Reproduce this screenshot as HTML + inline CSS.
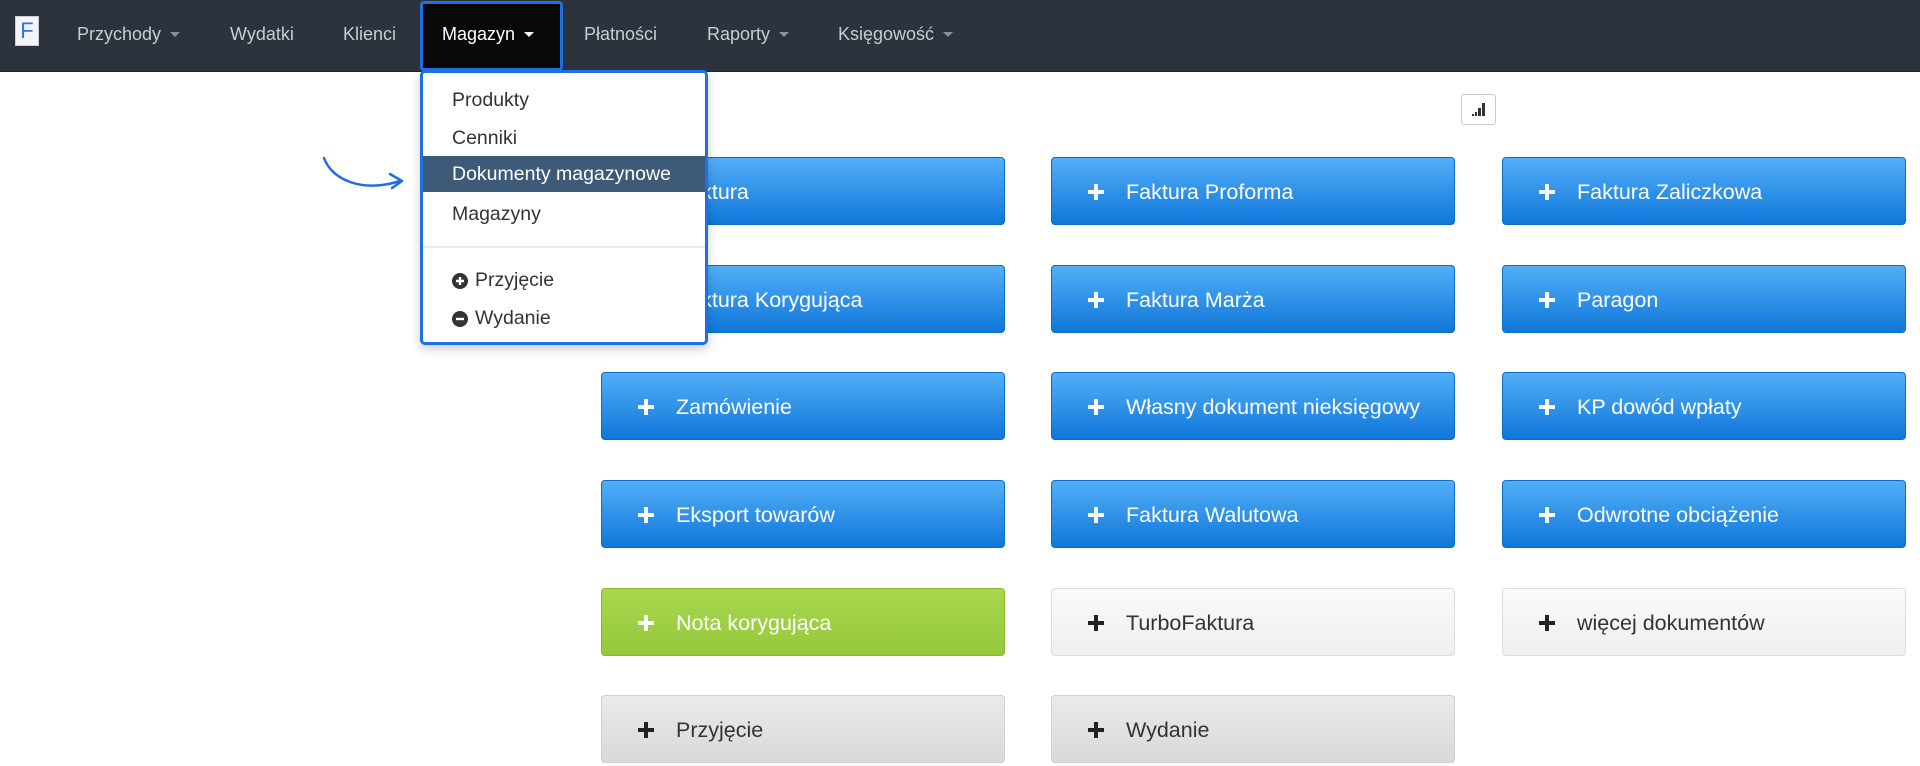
<!DOCTYPE html>
<html><head><meta charset="utf-8"><style>
*{box-sizing:border-box;margin:0;padding:0}
body{width:1920px;height:766px;background:#fff;font-family:"Liberation Sans",Arial,sans-serif;position:relative;overflow:hidden}
.nav{position:absolute;left:0;top:0;width:1920px;height:72px;background:#2c333d;border-bottom:1px solid #1e242b}
.ni{position:absolute;top:24px;color:#c9ccd0;font-size:18px;white-space:nowrap}
.car{display:inline-block;width:0;height:0;border-left:5px solid transparent;border-right:5px solid transparent;border-top:5px solid #8a9099;margin-left:9px;vertical-align:3px}
.logo{position:absolute;left:15px;top:16px;width:24px;height:30px;background:#f4f4f8;border:1px solid #ccc;color:#2a77d6;font-size:22px;line-height:28px;text-align:center}
.mag{position:absolute;left:420px;top:1px;width:143px;height:70px;background:#080808;border:3px solid #1f6fe5;border-radius:4px}
.dd{position:absolute;left:420px;top:70px;width:288px;height:275px;background:#fff;border:3px solid #1f6fe5;border-radius:5px;z-index:5;box-shadow:0 4px 10px rgba(0,0,0,.2)}
.di{position:absolute;left:29px;font-size:19.5px;color:#333;white-space:nowrap}
.hl{position:absolute;left:0;top:83px;width:282px;height:36px;background:#3d5a78}
.btn{position:absolute;width:404px;height:68px;border-radius:4px;font-size:21.5px;color:#fff;line-height:68px;padding-left:74px;white-space:nowrap}
.btn svg{position:absolute;left:36px;top:26px}
.b{background:linear-gradient(#52aef7,#0f77da);border:1px solid #0c6cc8}
.g{background:linear-gradient(#a9d64e,#94c93c);border:1px solid #86b830}
.l{background:linear-gradient(#fafafa,#efefef);border:1px solid #ddd;color:#333}
.d{background:linear-gradient(#eaeaea,#d9d9d9);border:1px solid #d0d0d0;color:#333}
</style></head><body>
<div class="nav">
<div class="logo">F</div>
<div class="ni" style="left:77px">Przychody<span class="car"></span></div>
<div class="ni" style="left:230px">Wydatki</div>
<div class="ni" style="left:343px">Klienci</div>
<div class="mag"></div>
<div class="ni" style="left:442px;color:#fff">Magazyn<span class="car" style="border-top-color:#fff"></span></div>
<div class="ni" style="left:584px">Płatności</div>
<div class="ni" style="left:707px">Raporty<span class="car"></span></div>
<div class="ni" style="left:838px">Księgowość<span class="car"></span></div>
</div>
<svg style="position:absolute;left:322px;top:155px" width="86" height="40" viewBox="0 0 86 40"><path d="M2 3 C10 25 40 38 78 26" fill="none" stroke="#1f6fe5" stroke-width="2.5" stroke-linecap="round"/><path d="M68 19 L80 26 L70 33" fill="none" stroke="#1f6fe5" stroke-width="2.5" stroke-linecap="round" stroke-linejoin="round"/></svg>
<div class="dd">
<div class="di" style="top:16px">Produkty</div>
<div class="di" style="top:54px">Cenniki</div>
<div class="hl"></div>
<div class="di" style="top:90px;color:#fff">Dokumenty magazynowe</div>
<div class="di" style="top:130px">Magazyny</div>
<div style="position:absolute;left:0;top:173px;width:282px;height:2px;background:#e8e8e8"></div>
<svg style="position:absolute;left:29px;top:200px" width="16" height="16"><circle cx="8" cy="8" r="8" fill="#333"/><path d="M8 4v8M4 8h8" stroke="#fff" stroke-width="2.4"/></svg>
<div class="di" style="top:196px;left:52px">Przyjęcie</div>
<svg style="position:absolute;left:29px;top:238px" width="16" height="16"><circle cx="8" cy="8" r="8" fill="#333"/><path d="M4 8h8" stroke="#fff" stroke-width="2.4"/></svg>
<div class="di" style="top:234px;left:52px">Wydanie</div>
</div>
<div style="position:absolute;left:1461px;top:94px;width:35px;height:31px;border:1px solid #ccc;border-radius:3px;background:#fff">
<svg width="33" height="29"><rect x="10" y="19" width="2" height="2" fill="#333"/><rect x="13" y="17" width="2" height="4" fill="#333"/><rect x="16" y="13" width="3" height="8" fill="#333"/><rect x="20" y="8" width="3" height="13" fill="#333"/></svg></div>

<div class="btn b" style="left:601px;top:157px"><svg width="16" height="16"><path d="M8 0v16M0 8h16" stroke="#fff" stroke-width="4"/></svg>Faktura</div>
<div class="btn b" style="left:1051px;top:157px"><svg width="16" height="16"><path d="M8 0v16M0 8h16" stroke="#fff" stroke-width="4"/></svg>Faktura Proforma</div>
<div class="btn b" style="left:1502px;top:157px"><svg width="16" height="16"><path d="M8 0v16M0 8h16" stroke="#fff" stroke-width="4"/></svg>Faktura Zaliczkowa</div>
<div class="btn b" style="left:601px;top:265px"><svg width="16" height="16"><path d="M8 0v16M0 8h16" stroke="#fff" stroke-width="4"/></svg>Faktura Korygująca</div>
<div class="btn b" style="left:1051px;top:265px"><svg width="16" height="16"><path d="M8 0v16M0 8h16" stroke="#fff" stroke-width="4"/></svg>Faktura Marża</div>
<div class="btn b" style="left:1502px;top:265px"><svg width="16" height="16"><path d="M8 0v16M0 8h16" stroke="#fff" stroke-width="4"/></svg>Paragon</div>
<div class="btn b" style="left:601px;top:372px"><svg width="16" height="16"><path d="M8 0v16M0 8h16" stroke="#fff" stroke-width="4"/></svg>Zamówienie</div>
<div class="btn b" style="left:1051px;top:372px"><svg width="16" height="16"><path d="M8 0v16M0 8h16" stroke="#fff" stroke-width="4"/></svg>Własny dokument nieksięgowy</div>
<div class="btn b" style="left:1502px;top:372px"><svg width="16" height="16"><path d="M8 0v16M0 8h16" stroke="#fff" stroke-width="4"/></svg>KP dowód wpłaty</div>
<div class="btn b" style="left:601px;top:480px"><svg width="16" height="16"><path d="M8 0v16M0 8h16" stroke="#fff" stroke-width="4"/></svg>Eksport towarów</div>
<div class="btn b" style="left:1051px;top:480px"><svg width="16" height="16"><path d="M8 0v16M0 8h16" stroke="#fff" stroke-width="4"/></svg>Faktura Walutowa</div>
<div class="btn b" style="left:1502px;top:480px"><svg width="16" height="16"><path d="M8 0v16M0 8h16" stroke="#fff" stroke-width="4"/></svg>Odwrotne obciążenie</div>
<div class="btn g" style="left:601px;top:588px"><svg width="16" height="16"><path d="M8 0v16M0 8h16" stroke="#fff" stroke-width="4"/></svg>Nota korygująca</div>
<div class="btn l" style="left:1051px;top:588px"><svg width="16" height="16"><path d="M8 0v16M0 8h16" stroke="#222" stroke-width="4"/></svg>TurboFaktura</div>
<div class="btn l" style="left:1502px;top:588px"><svg width="16" height="16"><path d="M8 0v16M0 8h16" stroke="#222" stroke-width="4"/></svg>więcej dokumentów</div>
<div class="btn d" style="left:601px;top:695px"><svg width="16" height="16"><path d="M8 0v16M0 8h16" stroke="#222" stroke-width="4"/></svg>Przyjęcie</div>
<div class="btn d" style="left:1051px;top:695px"><svg width="16" height="16"><path d="M8 0v16M0 8h16" stroke="#222" stroke-width="4"/></svg>Wydanie</div>
</body></html>
